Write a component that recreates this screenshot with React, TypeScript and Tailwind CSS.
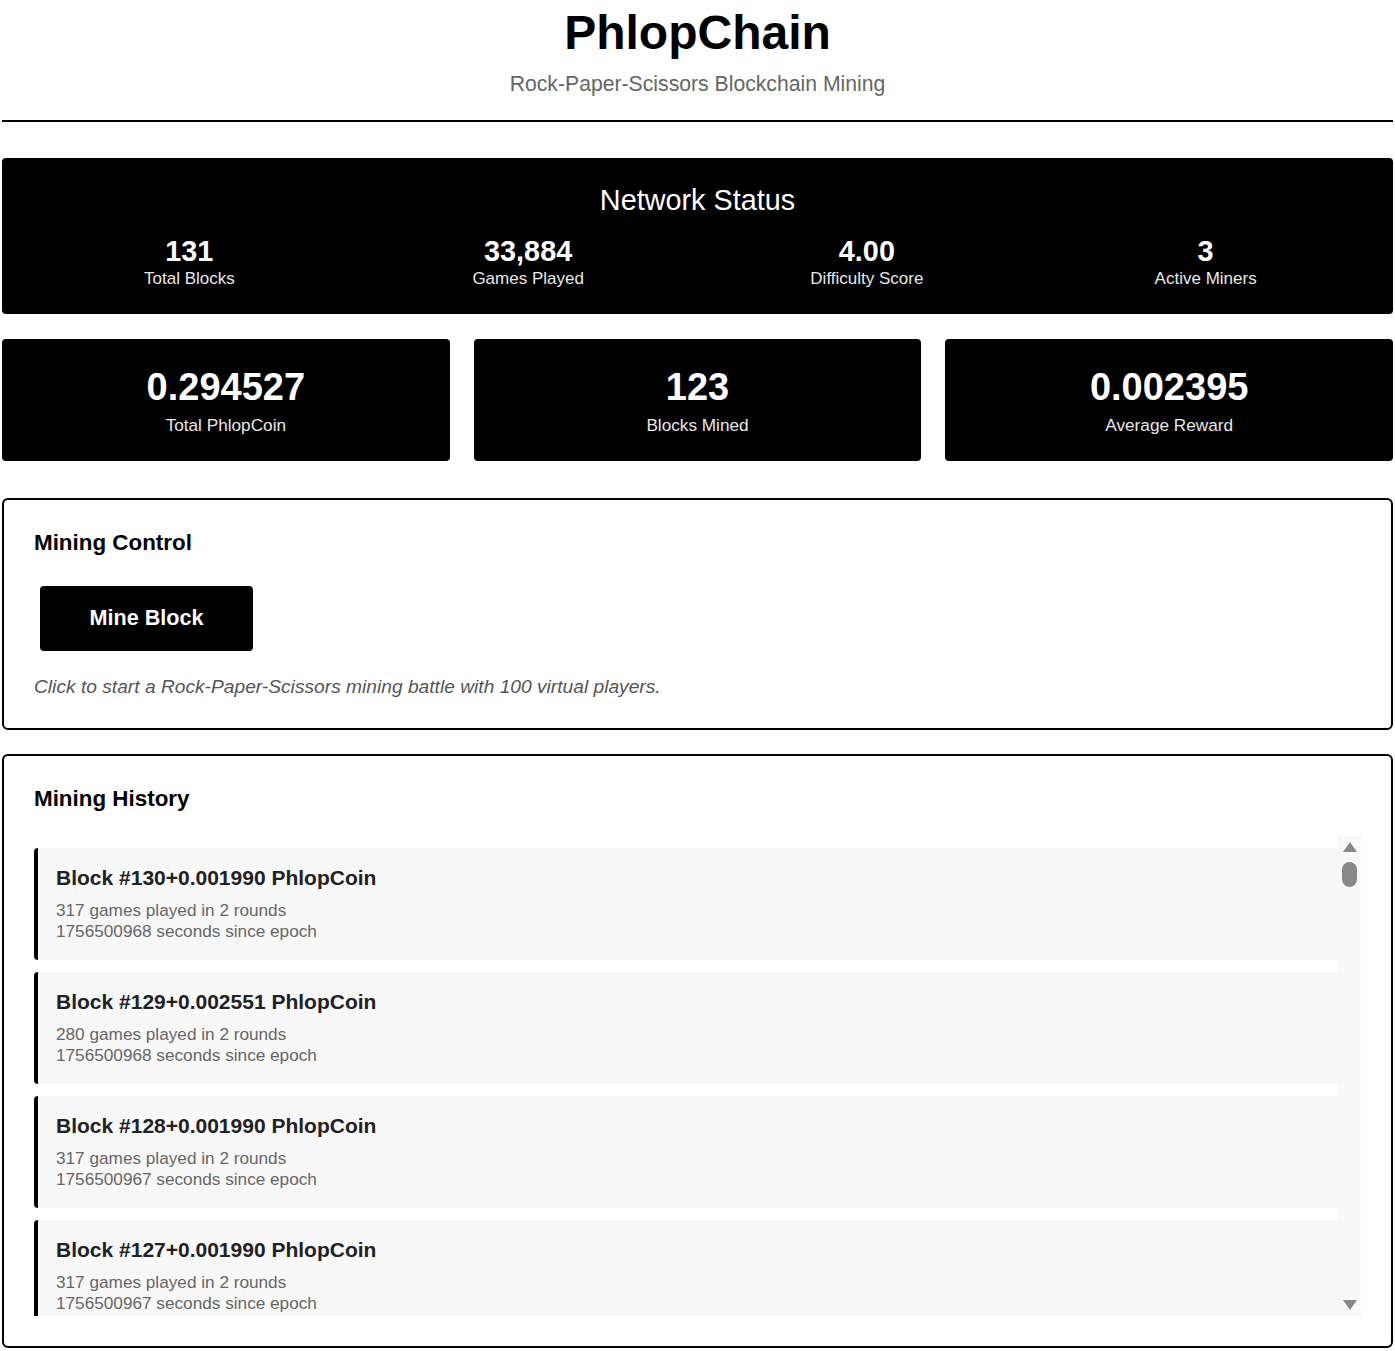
const networkStats = [
  { value: "131", label: "Total Blocks" },
  { value: "33,884", label: "Games Played" },
  { value: "4.00", label: "Difficulty Score" },
  { value: "3", label: "Active Miners" },
];

const walletStats = [
  { value: "0.294527", label: "Total PhlopCoin" },
  { value: "123", label: "Blocks Mined" },
  { value: "0.002395", label: "Average Reward" },
];

interface HistoryEntry {
  block: number;
  reward: string;
  games: number;
  rounds: number;
  time: number;
}

// newest first; only the rows that fit in the visible list
const history: HistoryEntry[] = [
  { block: 130, reward: "0.001990", games: 317, rounds: 2, time: 1756500968 },
  { block: 129, reward: "0.002551", games: 280, rounds: 2, time: 1756500968 },
  { block: 128, reward: "0.001990", games: 317, rounds: 2, time: 1756500967 },
  { block: 127, reward: "0.001990", games: 317, rounds: 2, time: 1756500967 },
];

function HistoryItem({ entry }: { entry: HistoryEntry }) {
  return (
    <div className="shrink-0 rounded-[4px] border-l-4 border-black bg-[#f8f8f8] pl-[18px] pr-4 pt-[18px] pb-[18px]">
      <div className="text-[21px] leading-[24px] font-bold text-[#222]">
        {`Block #${entry.block}+${entry.reward} PhlopCoin`}
      </div>
      <div className="mt-[10px] text-[17.2px] leading-[21px] text-[#666]">
        <div>{`${entry.games} games played in ${entry.rounds} rounds`}</div>
        <div>{`${entry.time} seconds since epoch`}</div>
      </div>
    </div>
  );
}

// classic scrollbar look (the headless page hides native scrollbars)
function ScrollRail() {
  return (
    <div className="flex w-[23px] shrink-0 flex-col items-center bg-[#f8f8f8] pt-[6px] pb-[6px]" aria-hidden="true">
      <svg width="14" height="10" viewBox="0 0 14 10">
        <path d="M7 0 L14 10 L0 10 Z" fill="#888" />
      </svg>
      <div className="mt-[10px] h-[25px] w-[15px] rounded-full bg-[#888]" />
      <div className="flex-1" />
      <svg width="14" height="10" viewBox="0 0 14 10">
        <path d="M0 0 L14 0 L7 10 Z" fill="#888" />
      </svg>
    </div>
  );
}

export default function App() {
  return (
    <div
      className="min-h-screen bg-white px-[2px] pb-[3px] text-black"
      style={{ fontFamily: '"Liberation Sans", Arial, sans-serif' }}
    >
      {/* Header */}
      <header className="border-b-2 border-black pt-[5px] pb-[25px] text-center">
        <h1 className="text-[48px] leading-[55px] font-bold">PhlopChain</h1>
        <p className="mt-[12px] text-[21.2px] leading-[23px] text-[#666]">
          Rock-Paper-Scissors Blockchain Mining
        </p>
      </header>

      {/* Network status */}
      <section className="mt-[36px] rounded-[4px] bg-black px-[18px] pt-[26px] pb-[26px] text-center text-white">
        <h2 className="text-[28.8px] leading-[32px]">Network Status</h2>
        <div className="mt-[18px] grid grid-cols-4">
          {networkStats.map((s) => (
            <div key={s.label}>
              <div className="text-[28.8px] leading-[34px] font-bold">{s.value}</div>
              <div className="mt-[2px] text-[17px] leading-[18px] text-[#e8e8e8]">{s.label}</div>
            </div>
          ))}
        </div>
      </section>

      {/* Wallet cards */}
      <div className="mt-[25px] grid grid-cols-3 gap-[24px]">
        {walletStats.map((s) => (
          <div
            key={s.label}
            className="rounded-[4px] bg-black pt-[28px] pb-[27px] text-center text-white"
          >
            <div className="text-[38px] leading-[41px] font-bold">{s.value}</div>
            <div className="mt-[8px] text-[17.2px] leading-[18px] text-[#e8e8e8]">{s.label}</div>
          </div>
        ))}
      </div>

      {/* Mining control */}
      <section className="mt-[37px] rounded-[6px] border-2 border-black px-[30px] pt-[30px] pb-[30px]">
        <h3 className="text-[22.4px] leading-[26px] font-bold">Mining Control</h3>
        <button className="mx-[6px] mt-[30px] block h-[65px] w-[213px] rounded-[4px] bg-black text-[21.6px] font-bold text-white">
          Mine Block
        </button>
        <p className="mt-[25px] text-[19.2px] leading-[22px] italic text-[#555]">
          Click to start a Rock-Paper-Scissors mining battle with 100 virtual players.
        </p>
      </section>

      {/* Mining history */}
      <section className="mt-[24px] rounded-[6px] border-2 border-black p-[30px]">
        <h3 className="text-[22.4px] leading-[26px] font-bold">Mining History</h3>
        <div className="mt-[24px] flex h-[480px]">
          <div className="flex min-w-0 flex-1 flex-col gap-[12px] overflow-y-hidden pt-[12px]">
            {history.map((h) => (
              <HistoryItem key={h.block} entry={h} />
            ))}
          </div>
          <ScrollRail />
        </div>
      </section>
    </div>
  );
}
